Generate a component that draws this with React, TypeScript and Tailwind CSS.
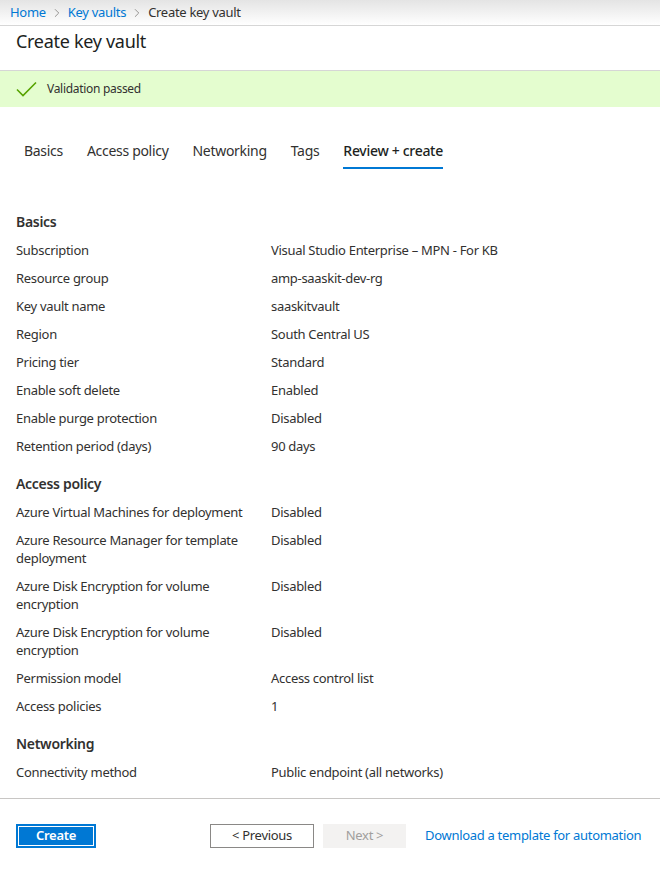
import { ChevronRight } from "lucide-react";

type Row = { label: string; value: string };

const sections: { title: string; rows: Row[] }[] = [
  {
    title: "Basics",
    rows: [
      { label: "Subscription", value: "Visual Studio Enterprise – MPN - For KB" },
      { label: "Resource group", value: "amp-saaskit-dev-rg" },
      { label: "Key vault name", value: "saaskitvault" },
      { label: "Region", value: "South Central US" },
      { label: "Pricing tier", value: "Standard" },
      { label: "Enable soft delete", value: "Enabled" },
      { label: "Enable purge protection", value: "Disabled" },
      { label: "Retention period (days)", value: "90 days" },
    ],
  },
  {
    title: "Access policy",
    rows: [
      { label: "Azure Virtual Machines for deployment", value: "Disabled" },
      { label: "Azure Resource Manager for template deployment", value: "Disabled" },
      { label: "Azure Disk Encryption for volume encryption", value: "Disabled" },
      { label: "Azure Disk Encryption for volume encryption", value: "Disabled" },
      { label: "Permission model", value: "Access control list" },
      { label: "Access policies", value: "1" },
    ],
  },
  {
    title: "Networking",
    rows: [{ label: "Connectivity method", value: "Public endpoint (all networks)" }],
  },
];

const tabs = ["Basics", "Access policy", "Networking", "Tags", "Review + create"];

export default function App() {
  return (
    <div className="w-[660px] h-[871px] bg-white text-[#323130] font-['Noto_Sans',sans-serif] tracking-[-0.3px] flex flex-col overflow-hidden">
      {/* breadcrumb */}
      <div className="h-[26px] shrink-0 bg-gradient-to-b from-[#e4e4e4] to-white border-b border-[#d6d6d6] flex items-center pl-[10px] text-[13px]">
        <span className="text-[#0078d4]">Home</span>
        <ChevronRight className="w-[14px] h-[14px] mx-[4px] text-[#8a8886]" strokeWidth={1.5} />
        <span className="text-[#0078d4]">Key vaults</span>
        <ChevronRight className="w-[14px] h-[14px] mx-[4px] text-[#8a8886]" strokeWidth={1.5} />
        <span>Create key vault</span>
      </div>

      <div className="h-[45px] shrink-0 border-b border-[#d6d6d6] pl-[16px] pt-[1px]">
        <h1 className="text-[18px] leading-[28px] text-[#201f1e]">Create key vault</h1>
      </div>

      {/* validation */}
      <div className="h-[36px] shrink-0 bg-[#e4fdcf] flex items-center pl-[16px] text-[12px]">
        <svg width="21" height="16" viewBox="0 0 21 16" className="mr-[10px]">
          <path d="M1 8.5 L7 14.5 L20 1.5" fill="none" stroke="#57a300" strokeWidth="1.6" />
        </svg>
        <span>Validation passed</span>
      </div>

      {/* tabs */}
      <div className="flex gap-[24px] pl-[24px] pt-[34px] text-[14px]">
        {tabs.map((t) => (
          <div
            key={t}
            className={
              t === "Review + create"
                ? "pb-[6px] border-b-2 border-[#0078d4] text-[#201f1e] font-medium leading-[20px]"
                : "pb-[6px] border-b-2 border-transparent leading-[20px]"
            }
          >
            {t}
          </div>
        ))}
      </div>

      {/* review */}
      <div className="flex-1 pl-[16px] pr-[16px] pt-[44px] text-[13px]">
        {sections.map((s, si) => (
          <div key={si} className={si > 0 ? "pt-[10px]" : ""}>
            <div className="text-[14px] font-semibold leading-[18px] mb-[10px]">{s.title}</div>
            {s.rows.map((r, ri) => (
              <div key={ri} className="flex leading-[18px] mb-[10px]">
                <div className="w-[255px] shrink-0 pr-[12px]">{r.label}</div>
                <div>{r.value}</div>
              </div>
            ))}
          </div>
        ))}
      </div>

      {/* footer */}
      <div className="h-[73px] shrink-0 border-t border-[#c8c6c4] flex items-center pl-[16px] pt-[2px] text-[13px]">
        <button className="w-[80px] h-[24px] bg-[#0078d4] text-white font-semibold border border-[#0078d4] outline outline-1 -outline-offset-[3px] outline-white">
          Create
        </button>
        <button className="ml-[114px] w-[104px] h-[24px] border border-[#8a8886] bg-white text-[#323130]">
          &lt; Previous
        </button>
        <button className="ml-[9px] w-[83px] h-[24px] bg-[#f3f2f1] text-[#a19f9d]">Next &gt;</button>
        <span className="ml-[19px] text-[#0078d4]">Download a template for automation</span>
      </div>
    </div>
  );
}
